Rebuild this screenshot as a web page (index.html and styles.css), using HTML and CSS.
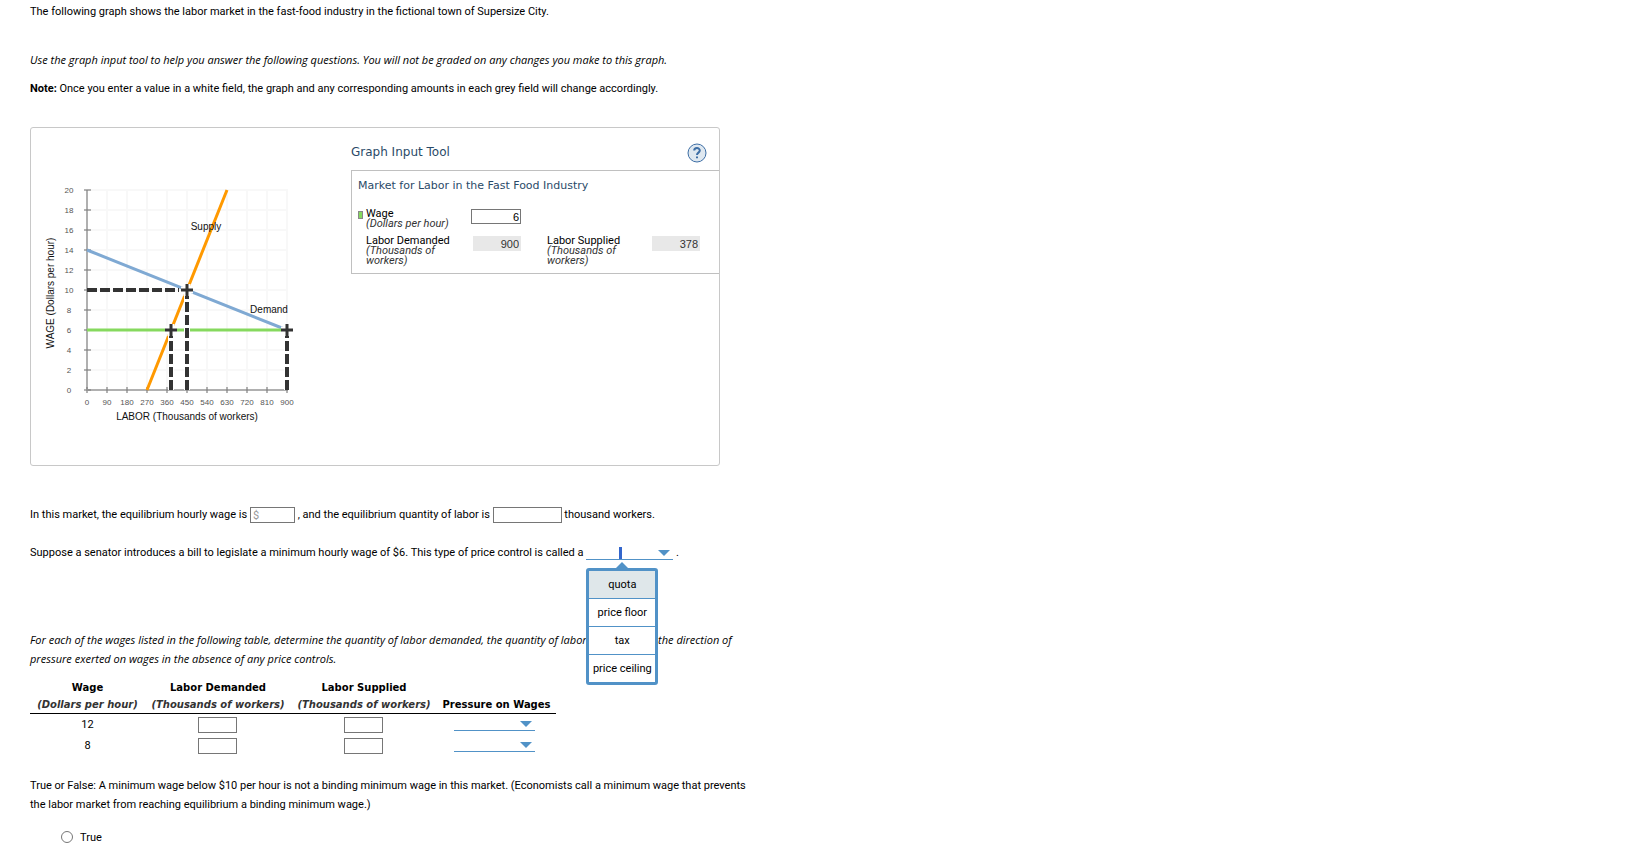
FILE: index.html
```html
<!DOCTYPE html>
<html lang="en">
<head>
<meta charset="utf-8">
<title>Labor market: price controls</title>
<link rel="stylesheet" href="styles.css">
</head>
<body>
<main class="question">
  <p class="intro">The following graph shows the labor market in the fast-food industry in the fictional town of Supersize City.</p>
  <p class="hint"><em>Use the graph input tool to help you answer the following questions. You will not be graded on any changes you make to this graph.</em></p>
  <p class="note"><strong>Note:</strong> Once you enter a value in a white field, the graph and any corresponding amounts in each grey field will change accordingly.</p>

  <section class="graph-box">
    <svg class="chart" width="280" height="280" viewBox="0 0 280 280" role="img" aria-label="Supply and demand for labor">
      <path class="grid" d="M76 20V220M96 20V220M116 20V220M136 20V220M156 20V220M176 20V220M196 20V220M216 20V220M236 20V220M256 20V220M56 20H257M56 40H257M56 60H257M56 80H257M56 100H257M56 120H257M56 140H257M56 160H257M56 180H257M56 200H257"/>
      <path class="axis" d="M56 20V221M55 220H257"/>
      <path class="ticks" d="M53 20h7M53 40h7M53 60h7M53 80h7M53 100h7M53 120h7M53 140h7M53 160h7M53 180h7M53 200h7M53 220h7M56 217v6M76 217v6M96 217v6M116 217v6M136 217v6M156 217v6M176 217v6M196 217v6M216 217v6M236 217v6M256 217v6"/>
      <path class="demand" d="M56 80L256 160"/>
      <path class="supply" d="M116 220L196 20"/>
      <path class="wage" d="M56 160H256"/>
      <path class="guide-halo" d="M140 165V220M156 125V220M256 165V220"/>
      <path class="guide" d="M56 120H148"/>
      <path class="guide" d="M140 220V164M156 220V124M256 220V164"/>
      <path class="mark-halo" d="M134 160h12M140 154v12M150 120h12M156 114v12M250 160h12M256 154v12"/>
      <path class="mark" d="M134 160h12M140 154v12M150 120h12M156 114v12M250 160h12M256 154v12"/>
      <g class="scale" text-anchor="middle">
        <text x="38" y="23">20</text><text x="38" y="43">18</text><text x="38" y="63">16</text><text x="38" y="83">14</text><text x="38" y="103">12</text><text x="38" y="123">10</text><text x="38" y="143">8</text><text x="38" y="163">6</text><text x="38" y="183">4</text><text x="38" y="203">2</text><text x="38" y="223">0</text>
        <text x="56" y="235">0</text><text x="76" y="235">90</text><text x="96" y="235">180</text><text x="116" y="235">270</text><text x="136" y="235">360</text><text x="156" y="235">450</text><text x="176" y="235">540</text><text x="196" y="235">630</text><text x="216" y="235">720</text><text x="236" y="235">810</text><text x="256" y="235">900</text>
      </g>
      <g class="names" text-anchor="middle">
        <text x="175" y="60">Supply</text>
        <text x="238" y="143">Demand</text>
        <text x="156" y="250">LABOR (Thousands of workers)</text>
        <text transform="translate(23 123) rotate(-90)">WAGE (Dollars per hour)</text>
      </g>
    </svg>

    <div class="tool">
      <header class="tool-head">
        <h2>Graph Input Tool</h2>
        <button class="help" type="button" aria-label="Help">
          <svg width="20" height="20" viewBox="0 0 20 20"><circle cx="10" cy="10" r="9"/><path d="M7.200 7.600C7.200 4.300 12.800 4.300 12.800 7.500C12.800 9.600 10 9.700 10 12M10 13.500v1.800"/></svg>
        </button>
      </header>
      <div class="tool-body">
        <h3>Market for Labor in the Fast Food Industry</h3>
        <div class="fields">
          <span class="swatch"></span>
          <label class="first" for="wage">Wage<em>(Dollars per hour)</em></label>
          <input id="wage" class="editable" type="text" value="6">
          <label for="demanded">Labor Demanded<em>(Thousands of workers)</em></label>
          <input id="demanded" class="fixed" type="text" value="900" readonly>
          <label class="third" for="supplied">Labor Supplied<em>(Thousands of workers)</em></label>
          <input id="supplied" class="fixed" type="text" value="378" readonly>
        </div>
      </div>
    </div>
  </section>

  <p class="equilibrium"><label for="eq-wage">In this market, the equilibrium hourly wage is</label> <input id="eq-wage" class="answer money" type="text" placeholder="$"> , and <label for="eq-labor">the equilibrium quantity of labor is</label> <input id="eq-labor" class="answer workers" type="text"> thousand workers.</p>

  <p class="control"><label for="kind">Suppose a senator introduces a bill to legislate a minimum hourly wage of $6. This type of price control is called a</label>
    <span class="picker open">
      <select id="kind"><option></option><option>quota</option><option>price floor</option><option>tax</option><option>price ceiling</option></select>
      <span class="cursor"></span>
      <span class="menu" role="listbox" aria-label="Price control">
        <button type="button" role="option" aria-selected="true">quota</button>
        <button type="button" role="option" aria-selected="false">price floor</button>
        <button type="button" role="option" aria-selected="false">tax</button>
        <button type="button" role="option" aria-selected="false">price ceiling</button>
      </span>
    </span> .</p>

  <p class="table-intro"><em>For each of the wages listed in the following table, determine the quantity of labor demanded, the quantity of labor supplied, and the direction of pressure exerted on wages in the absence of any price controls.</em></p>

  <table class="wages">
    <colgroup><col class="c-wage"><col class="c-qty"><col class="c-qty"><col class="c-pressure"></colgroup>
    <thead>
      <tr>
        <th scope="col">Wage<em>(Dollars per hour)</em></th>
        <th scope="col">Labor Demanded<em>(Thousands of workers)</em></th>
        <th scope="col">Labor Supplied<em>(Thousands of workers)</em></th>
        <th scope="col">Pressure on Wages</th>
      </tr>
    </thead>
    <tbody>
      <tr>
        <td>12</td>
        <td><input class="answer" type="text" aria-label="Labor demanded at 12"></td>
        <td><input class="answer" type="text" aria-label="Labor supplied at 12"></td>
        <td><span class="picker"><select aria-label="Pressure at 12"><option></option><option>Upward</option><option>Downward</option></select></span></td>
      </tr>
      <tr>
        <td>8</td>
        <td><input class="answer" type="text" aria-label="Labor demanded at 8"></td>
        <td><input class="answer" type="text" aria-label="Labor supplied at 8"></td>
        <td><span class="picker"><select aria-label="Pressure at 8"><option></option><option>Upward</option><option>Downward</option></select></span></td>
      </tr>
    </tbody>
  </table>

  <p class="binding">True or False: A minimum wage below $10 per hour is not a binding minimum wage in this market. (Economists call a minimum wage that prevents the labor market from reaching equilibrium a binding minimum wage.)</p>
  <div class="choice"><input id="true" type="radio" name="binding"><label for="true">True</label></div>
</main>
</body>
</html>
```

FILE: styles.css
```css
* { box-sizing: border-box; }
body {
  margin: 0;
  background: #fff;
  color: #000;
  font: 11px/19px Roboto, sans-serif;
}
.question { max-width: 752px; padding: 2px 0 0 30px; }
p { margin: 0; }
.hint { margin-top: 29px; }
.note { margin-top: 10px; }
.equilibrium { margin-top: 39px; }
.control { margin-top: 19px; }
.table-intro { margin-top: 68px; }
.hint, .table-intro { font-family: "Open Sans", sans-serif; }
.binding { margin-top: 20px; }
input, select, button { font: inherit; color: inherit; margin: 0; }

/* Graph and its input tool */
.graph-box {
  display: flex;
  gap: 10px;
  max-width: 690px;
  min-height: 339px;
  margin-top: 29px;
  border: 1px solid #c8c8c8;
  border-radius: 3px;
}
.chart { flex: none; width: 310px; margin-top: 42px; padding-right: 30px; font-family: "Liberation Sans", Arial, sans-serif; }
.chart path { fill: none; }
.grid { stroke: #f8f8f8; stroke-width: 2; }
.axis { stroke: #b0b0b0; stroke-width: 2; }
.ticks { stroke: #808080; stroke-opacity: .6; stroke-width: 2; }
.demand { stroke: #7fa9d3; stroke-width: 3; }
.supply { stroke: #ff9900; stroke-width: 3; }
.wage { stroke: #86d95e; stroke-width: 3; }
.guide { stroke: #333; stroke-width: 4; stroke-dasharray: 10 3; }
.guide-halo { stroke: #fff; stroke-width: 6; }
.mark-halo { stroke: #fff; stroke-width: 7; }
.mark { stroke: #333; stroke-width: 3; }
.scale { font-size: 8px; fill: #555; }
.names { font-size: 10px; fill: #111; }

.tool { flex: 1; }
.tool-head {
  display: flex;
  align-items: center;
  justify-content: space-between;
  height: 42px;
  padding: 7px 12px 0 0;
}
h2, h3 { margin: 0; font-weight: normal; font-family: Verdana, "DejaVu Sans", sans-serif; color: #2a4a68; }
h2 { font-size: 12px; }
h3 { font-size: 11px; }
.help { width: 20px; height: 20px; padding: 0; border: 0; background: none; }
.help svg { display: block; fill: none; stroke: #3d6ea5; stroke-width: 2; }
.help circle { fill: #dfe8f0; stroke-width: 1; }
.tool-body { height: 104px; padding: 5px 6px; border: 1px solid #c0c0c0; border-right: 0; }
.fields {
  display: grid;
  grid-template-columns: 8px 88px 17px 50px 26px 88px 16px 49px;
  grid-template-rows: 27px auto;
  align-items: start;
  margin-top: 14px;
  line-height: 10px;
}
.fields label { grid-column: 2; }
.fields em { display: block; color: #333; }
.fields .first { white-space: nowrap; }
.fields .third { grid-column: 6; grid-row: 2; }
.swatch { width: 5px; height: 8px; margin-top: 2px; border: 1px solid #888; background: #86d95e; }
.fields input {
  width: 100%;
  height: 15px;
  padding: 0 1px;
  border: 1px solid transparent;
  text-align: right;
  font: 11px "Liberation Sans", Arial, sans-serif;
}
.fields .editable { grid-column: 4; border-color: #767676; background: #fff; }
.fields .fixed { grid-column: 4; grid-row: 2; width: 48px; background: #e8e8e8; color: #333; justify-self: end; }
.fields #supplied { grid-column: 8; }

/* Answer controls */
.answer { width: 39px; height: 16px; padding: 0 2px; border: 1px solid #767676; background: #fff; vertical-align: middle; }
.money { width: 45px; }
.workers { width: 69px; }
.answer::placeholder { color: #999; opacity: 1; }
.picker { position: relative; display: inline-block; width: 81px; height: 15px; vertical-align: middle; }
.picker select {
  display: block;
  width: 100%;
  height: 14px;
  padding: 0 16px 0 2px;
  border: 0;
  border-bottom: 1px solid #5192c7;
  border-radius: 0;
  background: none;
  appearance: none;
}
.picker::after {
  content: "";
  position: absolute;
  top: 4px;
  right: 3px;
  border: 6px solid transparent;
  border-top-color: #5192c7;
  border-bottom: 0;
  pointer-events: none;
}
.picker.open { width: 87px; }
.cursor { position: absolute; left: 33px; top: 1px; width: 3px; height: 12px; background: #3366cc; }
.menu {
  position: absolute;
  z-index: 1;
  left: 0;
  top: 22px;
  width: 72px;
  border: 3px solid #5192c7;
  border-radius: 3px;
  background: #fff;
}
.menu::before {
  content: "";
  position: absolute;
  left: 27px;
  top: -9px;
  border: 6px solid transparent;
  border-bottom-color: #5192c7;
  border-top: 0;
}
.menu button { display: block; width: 100%; height: 28px; padding: 0; border: 0; background: none; white-space: nowrap; }
.menu button + button { border-top: 1px solid #5192c7; }
.menu [aria-selected="true"] { height: 27px; background: #dfe7ea; }

/* Wage table */
.wages { table-layout: fixed; width: 526px; margin-top: 11px; border-collapse: collapse; text-align: center; }
.c-wage { width: 115px; }
.c-qty { width: 146px; }
.c-pressure { width: 119px; }
.wages th { padding: 0; border-bottom: 1px solid #000; vertical-align: bottom; font: bold 10px/17px Verdana, "DejaVu Sans", sans-serif; }
.wages th em { display: block; color: #333; }
.wages td { height: 21px; padding: 0; line-height: 17px; }
.wages td:nth-child(2), .wages td:nth-child(3) { padding-right: 2px; }
.wages td:last-child { padding-right: 4px; }

.choice { display: flex; align-items: center; gap: 7px; margin: 14px 0 0 31px; }
.choice input { width: 12px; height: 12px; }
```
